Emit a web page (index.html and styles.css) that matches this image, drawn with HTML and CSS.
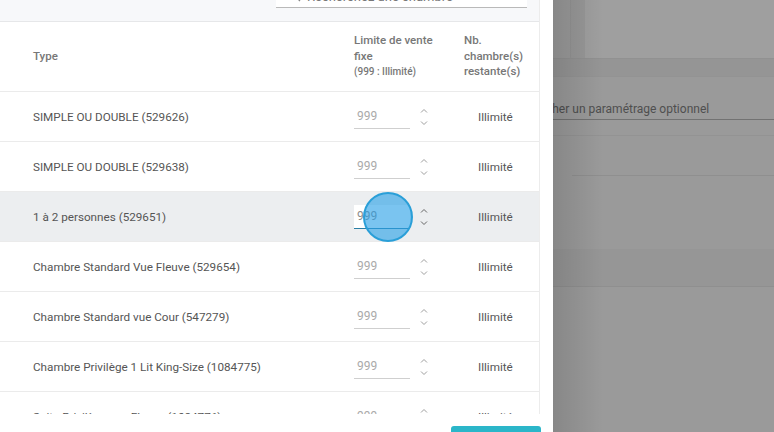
FILE: index.html
```html
<!DOCTYPE html>
<html lang="fr">
<head>
<meta charset="UTF-8">
<title>Limites de vente</title>
<meta name="viewport" content="width=device-width,initial-scale=1">
<link rel="stylesheet" href="styles.css">
</head>
<body>

<div class="drawer">
  <div class="content">
    <!-- search bar (scrolled partly out of view) -->
    <div class="toolbar">
      <div class="search">
        <svg class="search-icon" width="11" height="11" viewBox="0 0 11 11"><circle cx="4.5" cy="4.5" r="3.5" fill="none" stroke="#888" stroke-width="1.3"/><path d="M7 7 L10 10" stroke="#888" stroke-width="1.3"/></svg>
        <span class="search-text">Recherchez une chambre</span>
      </div>
    </div>

    <div class="table">
      <div class="row head">
        <div class="cell type">Type</div>
        <div class="cell">Limite de vente fixe<small>(999 : Illimité)</small></div>
        <div class="cell">Nb. chambre(s) restante(s)</div>
      </div>

      <div class="row">
        <div class="cell type">SIMPLE OU DOUBLE (529626)</div>
        <div class="cell qty"><span class="field">999</span><svg class="spin" width="8" height="18" viewBox="0 0 8 18"><path d="M1 4.5 L4 1.5 L7 4.5 M1 13.5 L4 16.5 L7 13.5"/></svg></div>
        <div class="cell left">Illimité</div>
      </div>
      <div class="row">
        <div class="cell type">SIMPLE OU DOUBLE (529638)</div>
        <div class="cell qty"><span class="field">999</span><svg class="spin" width="8" height="18" viewBox="0 0 8 18"><path d="M1 4.5 L4 1.5 L7 4.5 M1 13.5 L4 16.5 L7 13.5"/></svg></div>
        <div class="cell left">Illimité</div>
      </div>
      <div class="row active">
        <div class="cell type">1 à 2 personnes (529651)</div>
        <div class="cell qty">
          <span class="field focus">999</span><svg class="spin dark" width="8" height="18" viewBox="0 0 8 18"><path d="M1 4.5 L4 1.5 L7 4.5 M1 13.5 L4 16.5 L7 13.5"/></svg>
          <span class="touch"></span>
        </div>
        <div class="cell left">Illimité</div>
      </div>
      <div class="row">
        <div class="cell type">Chambre Standard Vue Fleuve (529654)</div>
        <div class="cell qty"><span class="field">999</span><svg class="spin" width="8" height="18" viewBox="0 0 8 18"><path d="M1 4.5 L4 1.5 L7 4.5 M1 13.5 L4 16.5 L7 13.5"/></svg></div>
        <div class="cell left">Illimité</div>
      </div>
      <div class="row">
        <div class="cell type">Chambre Standard vue Cour (547279)</div>
        <div class="cell qty"><span class="field">999</span><svg class="spin" width="8" height="18" viewBox="0 0 8 18"><path d="M1 4.5 L4 1.5 L7 4.5 M1 13.5 L4 16.5 L7 13.5"/></svg></div>
        <div class="cell left">Illimité</div>
      </div>
      <div class="row">
        <div class="cell type">Chambre Privilège 1 Lit King-Size (1084775)</div>
        <div class="cell qty"><span class="field">999</span><svg class="spin" width="8" height="18" viewBox="0 0 8 18"><path d="M1 4.5 L4 1.5 L7 4.5 M1 13.5 L4 16.5 L7 13.5"/></svg></div>
        <div class="cell left">Illimité</div>
      </div>
      <div class="row">
        <div class="cell type">Suite Privilège vue Fleuve (1084776)</div>
        <div class="cell qty"><span class="field">999</span><svg class="spin" width="8" height="18" viewBox="0 0 8 18"><path d="M1 4.5 L4 1.5 L7 4.5 M1 13.5 L4 16.5 L7 13.5"/></svg></div>
        <div class="cell left">Illimité</div>
      </div>
    </div>
  </div>

  <div class="footer">
    <button class="save">Enregistrer</button>
  </div>
</div>

<!-- page behind the drawer, dimmed -->
<div class="backdrop">
  <div class="bg-head"><div class="bg-panel"></div></div>
  <div class="bg-band"></div>
  <div class="bg-search">Rechercher un paramétrage optionnel</div>
  <div class="bg-line"></div>
  <div class="bg-line short"></div>
  <div class="bg-band dark"></div>
</div>

</body>
</html>
```

FILE: styles.css
```css
:root{
  --text:#555;
  --muted:#777;
  --line:#ebebeb;
  --teal:#2bb6c9;
}
body{
  margin:0; height:432px; overflow:hidden;
  display:flex; font-family:Roboto, "Liberation Sans", sans-serif; color:var(--text);
}

/* ---------- drawer ---------- */
.drawer{
  width:553px; height:432px; flex:none; background:#fff; overflow:hidden;
  display:flex; flex-direction:column; position:relative; z-index:1;
}
.content{
  width:540px; height:414px; flex:none; overflow:hidden;
  border-right:1px solid #ececec; box-sizing:border-box;
}
.toolbar{
  height:40px; margin-top:-19px;
  background:#f7f8fa; border-bottom:1px solid #e6e7e9;
  display:flex; justify-content:flex-end; padding-right:12px;
}
.search{
  width:251px; height:27px; background:#fff;
  border-bottom:1px solid #b9b9b9; box-sizing:border-box;
  display:flex; align-items:flex-end; gap:6px; padding:0 0 3px 14px;
  font-size:13px; color:#777;
}
.search-icon{margin-bottom:2px;}
.search-text{line-height:14px;}

/* ---------- table ---------- */
.row{
  display:grid; grid-template-columns:354px 110px 1fr;
  align-items:center; height:50px; box-sizing:border-box;
  border-bottom:1px solid var(--line); font-size:11.7px;
}
.row.head{
  height:70px; font-size:11.5px; font-weight:500; color:var(--muted); line-height:15.5px;
}
.row.head .cell:nth-child(2){padding-right:14px;}
.row.head .cell:nth-child(3){padding-right:8px;}
.row.head small{display:block; font-size:10px; font-weight:500; line-height:16px;}
.cell.type{padding-left:33px;}
.cell.left{padding-left:14px;}
.row.active{background:#eceef0;}

.qty{display:flex; align-items:center; position:relative;}
.field{
  width:56px; height:24px; box-sizing:border-box; padding-left:3px;
  border-bottom:1px solid #cfcfcf; line-height:23px; color:#aaa; font-size:12px;
}
.field.focus{background:#fff; border-bottom-color:#2a7fa6; color:#8a8a8a;}
.spin{margin-left:10px; fill:none; stroke:#9f9f9f; stroke-width:1;}
.spin.dark{stroke:#666;}

.touch{
  position:absolute; left:9px; top:50%; margin-top:-25px;
  width:46px; height:46px; border-radius:50%;
  background:rgba(40,160,230,.62); border:2px solid #2a9fd8;
}

/* ---------- footer ---------- */
.footer{flex:1; display:flex; justify-content:flex-end; padding:12px 12px 0 0;}
.save{
  width:90px; height:32px; border:0; border-radius:3px;
  background:var(--teal); color:#fff; font:500 12px Roboto, sans-serif;
}

/* ---------- dimmed background page ---------- */
.backdrop{
  flex:1; background:#9a9a9a; overflow:hidden; position:relative;
}
.backdrop::before{
  content:""; position:absolute; left:0; top:0; bottom:0; width:50px;
  background:linear-gradient(to right, rgba(0,0,0,.12), rgba(0,0,0,0));
}
.bg-head{height:58px; padding-left:17px; box-sizing:border-box;}
.bg-head .bg-panel{
  height:100%; border-left:1px solid #939393; padding-left:14px;
  background:linear-gradient(to right, #989898 14px, #9f9f9f 14px);
}
.bg-band{height:17px; background:#959595; border-top:1px solid #919191; border-bottom:1px solid #939393;}
.bg-search{
  margin:25px 0 0 -44px; padding-bottom:3px; font-size:12px; color:#4f4f4f;
  border-bottom:1px solid #727272; white-space:nowrap;
}
.bg-line{height:1px; background:#939393; margin-top:15px;}
.bg-line.short{margin:39px 0 0 19px; background:#8f8f8f;}
.bg-band.dark{margin-top:73px; height:37px; background:#969696; border:0; border-bottom:1px solid #8f8f8f;}
```
